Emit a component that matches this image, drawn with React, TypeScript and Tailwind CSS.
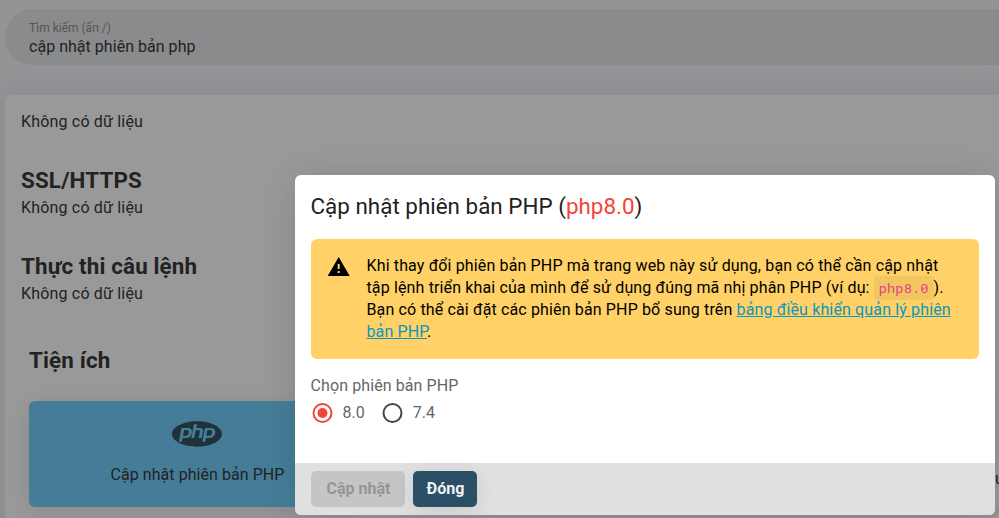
import type { ReactNode } from 'react';

function EmptySection({ title }: { title: string }) {
  return (
    <section className="h-[86px]">
      <h2 className="text-[22.4px] leading-[28px] font-bold tracking-[0.15px]">{title}</h2>
      <p className="mt-[2px] text-base leading-6 tracking-[0.18px]">Không có dữ liệu</p>
    </section>
  );
}

function PhpLogo() {
  return (
    <svg viewBox="0 0 24 24" className="mr-px size-[50px] text-[#20313a]">
      <path
        fill="currentColor"
        d="M12 18.08C5.37 18.08 0 15.36 0 12s5.37-6.08 12-6.08S24 8.64 24 12s-5.37 6.08-12 6.08M6.81 10.13c.54 0 .91.1 1.09.31.18.2.22.56.13 1.03-.1.53-.29.87-.58 1.09-.28.22-.71.33-1.29.33h-.87l.53-2.76h.99m-3.5 5.55h1.44l.34-1.75h1.23c.54 0 .98-.06 1.33-.17.35-.12.67-.31.96-.58.24-.22.43-.46.58-.73.15-.26.26-.56.31-.88.16-.78.05-1.39-.33-1.82-.39-.44-.99-.65-1.82-.65H4.59l-1.28 6.58m7.25-8.33-1.28 6.58h1.42l.74-3.77h1.14c.36 0 .6.06.71.18.11.12.13.34.07.66l-.57 2.93h1.45l.59-3.07c.13-.62.03-1.07-.27-1.36-.3-.27-.85-.4-1.65-.4h-1.27L12 7.35h-1.44M18 10.13c.55 0 .91.1 1.09.31.18.2.22.56.13 1.03-.1.53-.29.87-.57 1.09-.29.22-.72.33-1.3.33h-.85l.5-2.76h1m-3.5 5.55h1.44l.34-1.75h1.22c.55 0 1-.06 1.35-.17.35-.12.67-.31.95-.58.24-.22.44-.46.58-.73.15-.26.26-.56.32-.88.15-.78.04-1.39-.34-1.82-.36-.44-.99-.65-1.82-.65h-2.75l-1.29 6.58z"
      />
    </svg>
  );
}

function Radio({ checked, children }: { checked?: boolean; children: ReactNode }) {
  return (
    <label className="flex items-center gap-2 text-[#666]">
      <svg viewBox="0 0 24 24" className={checked ? 'size-6 text-[#f44336]' : 'size-6 text-[#444]'}>
        <circle cx="11.5" cy="12" r="9" fill="none" stroke="currentColor" strokeWidth="2" />
        {checked && <circle cx="11.5" cy="12" r="5" fill="currentColor" />}
      </svg>
      <span>{children}</span>
    </label>
  );
}

function Dialog() {
  return (
    <div
      role="dialog"
      className="absolute top-[175px] left-[294.5px] flex h-[340px] w-[700px] flex-col overflow-hidden rounded-md bg-white shadow-[0_4px_36px_rgba(0,0,0,0.12)]"
    >
      <div className="flex grow flex-col px-4 pt-[15px]">
        <h1 className="text-[22.4px] leading-8 tracking-[0.02px] text-[#212121]">
          Cập nhật phiên bản PHP (<span className="text-[#f44336]">php8.0</span>)
        </h1>
        <div className="mt-[17px] flex h-[120px] rounded-md bg-[#ffd166] py-4 pl-4 text-black">
          <svg viewBox="0 0 24 24" className="mr-4 size-6 shrink-0">
            <path fill="currentColor" d="M12.7 14h-2V9h2m0 9h-2v-2h2M.7 21h22l-11-19z" />
          </svg>
          <p className="w-[600px] leading-[22px] tracking-[0.14px] whitespace-nowrap">
            Khi thay đổi phiên bản PHP mà trang web này sử dụng, bạn có thể cần cập nhật
            <br />
            tập lệnh triển khai của mình để sử dụng đúng mã nhị phân PHP (ví dụ:{' '}
            <code className="rounded bg-black/5 px-[5px] py-[3px] font-['Roboto_Mono','DejaVu_Sans_Mono',monospace] text-[13.6px] tracking-[0.15px] text-[#e83e8c]">
              php8.0
            </code>
            ).
            <br />
            Bạn có thể cài đặt các phiên bản PHP bổ sung trên{' '}
            <a className="text-[#0d96c0] underline">bảng điều khiển quản lý phiên</a>
            <br />
            <a className="text-[#0d96c0] underline">bản PHP</a>.
          </p>
        </div>
        <p className="mt-[15px] leading-6 tracking-[0.1px] text-[#666]">Chọn phiên bản PHP</p>
        <div className="mt-[3px] flex gap-4">
          <Radio checked>8.0</Radio>
          <Radio>7.4</Radio>
        </div>
      </div>
      <div className="flex h-[52px] shrink-0 gap-2 bg-[#e0e0e0] px-4 pt-2 font-bold">
        <button className="h-9 w-[94px] rounded-[5px] bg-[#c5c5c5] pl-[2px] text-[#959595]">Cập nhật</button>
        <button className="h-9 w-16 rounded-[5px] bg-[#2b4f66] pl-[2px] text-[#f0f2f4] shadow-[0_4px_20px_rgba(0,0,0,0.1)]">
          Đóng
        </button>
      </div>
    </div>
  );
}

export default function App() {
  return (
    <div className="relative h-[518px] w-[999px] overflow-hidden bg-[#939496] pt-[9px] pl-[5px] font-[Roboto,sans-serif] text-base text-[#222]">
      <div className="flex h-14 flex-col rounded-l-full bg-[#8a8b8c] pt-[10px] pl-6">
        <label className="h-[18px] text-xs leading-[18px] text-[#555]">Tìm kiếm (ấn /)</label>
        <span className="leading-[19px] tracking-[0.03px]">cập nhật phiên bản php</span>
      </div>
      <main className="mt-[30px] h-[440px] rounded-tl-md bg-[#999] pt-[15px] pl-4 shadow-[0_0_28px_rgba(60,70,90,0.14)]">
        <p className="h-[56px] leading-6 tracking-[0.18px]">Không có dữ liệu</p>
        <EmptySection title="SSL/HTTPS" />
        <EmptySection title="Thực thi câu lệnh" />
        <section className="pt-[8px] pl-2">
          <h2 className="text-[22.4px] leading-[28px] font-bold tracking-[0.15px]">Tiện ích</h2>
          <div className="mt-[27px] flex gap-6">
            <div className="flex h-[106px] w-[337px] shrink-0 flex-col items-center rounded-md bg-[#457d98] pt-[8px] shadow-[0_4px_20px_rgba(0,0,0,0.1)]">
              <PhpLogo />
              <span className="mt-1 leading-6 tracking-[0.05px]">Cập nhật phiên bản PHP</span>
            </div>
            <div className="flex h-[106px] w-[609px] shrink-0 items-end rounded-md pb-4 pl-[605px] shadow-[0_4px_20px_rgba(0,0,0,0.1)]">
              <span className="leading-6">u</span>
            </div>
          </div>
        </section>
      </main>
      <Dialog />
    </div>
  );
}
